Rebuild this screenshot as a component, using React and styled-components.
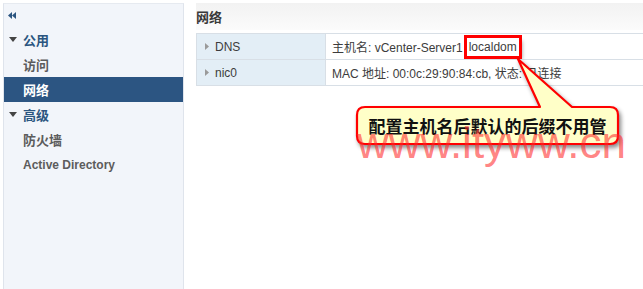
import styled, { createGlobalStyle } from "styled-components";

const Global = createGlobalStyle`
    html, body {
        margin: 0;
        padding: 0;
        background: #fff;
        font-family: "Liberation Sans", "Noto Sans CJK SC", sans-serif;
    }
`

const Page = styled.div`
    position: relative;
    display: flex;
    width: 643px;
    height: 289px;
    overflow: hidden;
`

const Sidebar = styled.div`
    width: 179px;
    margin: 3px 0 0 3px;
    background: #f2f5fa;
    border-left: 1px solid #dfe4ec;
    border-right: 1px solid #dfe4ec;
    border-top: 1px solid #e6eaf0;
    display: flex;
    flex-direction: column;
`

const Collapse = styled.div`
    height: 23px;
    display: flex;
    align-items: center;
    padding-left: 4px;
`

const Item = styled.div`
    height: 25px;
    display: flex;
    align-items: center;
    gap: 6px;
    padding-left: ${p => (p.$section ? "5px" : "19px")};
    font-size: ${p => (p.$latin ? "12px" : "13px")};
    font-weight: bold;
    color: ${p => (p.$selected ? "#fff" : p.$section ? "#2b5580" : "#5c5c5c")};
    background: ${p => (p.$selected ? "#2c5582" : "transparent")};
`

const Main = styled.div`
    flex: 1;
    margin: 3px 0 0 12px;
    display: flex;
    flex-direction: column;
`

const Title = styled.div`
    height: 27px;
    display: flex;
    align-items: center;
    font-size: 13px;
    font-weight: bold;
    color: #3a3a3a;
    background: linear-gradient(#f2f2f2, #fbfbfb);
`

const Table = styled.div`
    margin-top: 3px;
    border: 1px solid #d8dfe6;
    border-right: none;
    display: grid;
    grid-template-columns: 129px 1fr;
`

const Cell = styled.div`
    height: 25px;
    display: flex;
    align-items: center;
    font-size: 12px;
    color: #3c3c3c;
    white-space: nowrap;
    border-top: ${p => (p.$first ? "none" : "1px solid #d8dfe6")};
    background: ${p => (p.$key ? "#e3eef6" : "#fff")};
    border-right: ${p => (p.$key ? "1px solid #d8dfe6" : "none")};
    padding-left: ${p => (p.$key ? "8px" : "6px")};
    gap: ${p => (p.$key ? "6px" : "0")};
`

const Highlight = styled.span`
    outline: 3px solid #f00;
    outline-offset: 0;
    box-shadow: 3px 3px 4px rgba(0, 0, 0, 0.4);
    padding: 2px 2px;
    margin-left: 4px;
`

const Callout = styled.div`
    position: absolute;
    left: 350px;
    top: 50px;
    width: 280px;
    height: 105px;
    svg {
        position: absolute;
        inset: 0;
        filter: drop-shadow(2px 3px 2px rgba(0, 0, 0, 0.45));
    }
`

const CalloutText = styled.div`
    position: absolute;
    left: 7px;
    top: 57px;
    width: 261px;
    height: 37px;
    display: flex;
    align-items: center;
    justify-content: center;
    font-family: "Noto Sans CJK SC", sans-serif;
    font-size: 17px;
    font-weight: bold;
    color: #111;
`

const Watermark = styled.div`
    position: absolute;
    left: 357px;
    top: 121px;
    font-family: "Liberation Sans", Arial, sans-serif;
    font-size: 44px;
    line-height: 44px;
    color: rgba(255, 40, 40, 0.58);
    white-space: nowrap;
    pointer-events: none;
`

function Triangle({ dir = "down", color = "#444" }) {
    const pts = dir === "down" ? "0,0 8,0 4,5" : "0,0 4,3.5 0,7"
    const w = dir === "down" ? 8 : 4
    const h = dir === "down" ? 5 : 7
    return (
        <svg width={w} height={h} viewBox={`0 0 ${w} ${h}`}>
            <polygon points={pts} fill={color} />
        </svg>
    )
}

export default function App() {
    return <Page>
        <Global />
        <Sidebar>
            <Collapse>
                <svg width="8" height="7" viewBox="0 0 8 7">
                    <polygon points="4,0 4,7 0,3.5" fill="#2b5580" />
                    <polygon points="8,0 8,7 4,3.5" fill="#2b5580" />
                </svg>
            </Collapse>
            <Item $section><Triangle dir="down" />公用</Item>
            <Item>访问</Item>
            <Item $selected>网络</Item>
            <Item $section><Triangle dir="down" />高级</Item>
            <Item>防火墙</Item>
            <Item $latin>Active Directory</Item>
        </Sidebar>
        <Main>
            <Title>网络</Title>
            <Table>
                <Cell $key $first><Triangle dir="right" color="#9a9a9a" />DNS</Cell>
                <Cell $first>主机名: vCenter-Server1<Highlight>localdom</Highlight></Cell>
                <Cell $key><Triangle dir="right" color="#9a9a9a" />nic0</Cell>
                <Cell>MAC 地址: 00:0c:29:90:84:cb, 状态: 已连接</Cell>
            </Table>
        </Main>
        <Callout>
            <svg width="280" height="105" viewBox="0 0 280 105">
                <path
                    d="M 15 57 L 190 57 L 168 9 L 222 57 L 260 57 Q 268 57 268 65 L 268 86 Q 268 94 260 94 L 15 94 Q 7 94 7 86 L 7 65 Q 7 57 15 57 Z"
                    fill="#ffffc8"
                    stroke="#f00"
                    strokeWidth="2.2"
                    strokeLinejoin="round"
                />
            </svg>
            <CalloutText>配置主机名后默认的后缀不用管</CalloutText>
        </Callout>
        <Watermark>www.ityww.cn</Watermark>
    </Page>
}
